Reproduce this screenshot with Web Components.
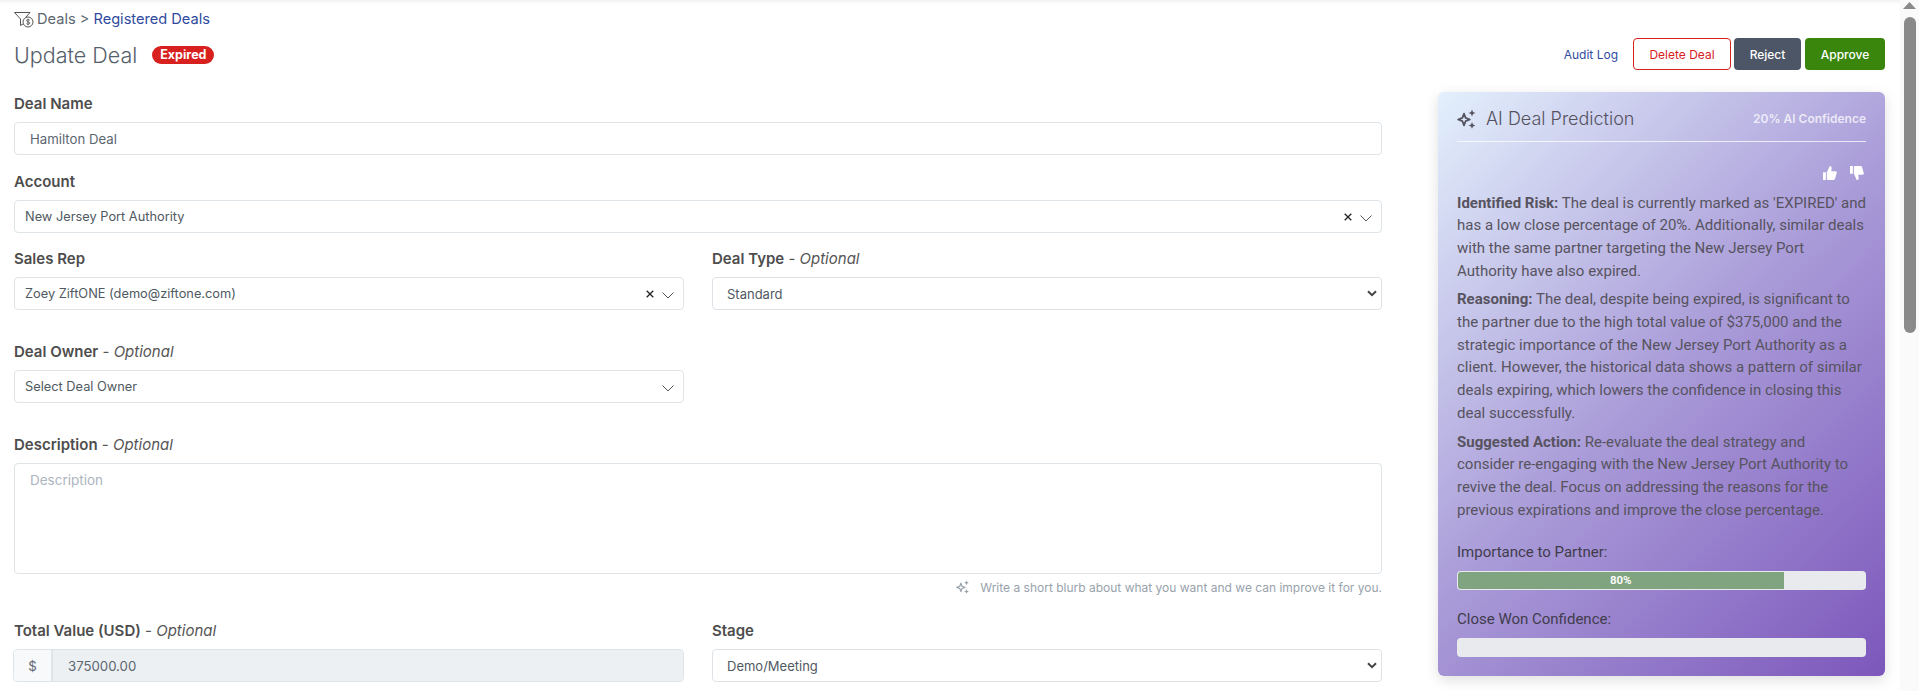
<!DOCTYPE html>
<html lang="en">
<head>
<meta charset="utf-8">
<title>Update Deal</title>
<style>
    html, body { margin: 0; height: 100%; overflow: hidden; background: #fff; }
    body { font-family: Inter, "Liberation Sans", sans-serif; color: #495057; }
</style>
</head>
<body>
<deal-page></deal-page>

<script>
const SPARKLE = `<svg viewBox="0 0 20 20" width="100%" height="100%"><path d="M7 4.6 8.600 8.900 12.900 10.500 8.600 12.100 7 16.400 5.400 12.100 1.100 10.500 5.400 8.900Z" fill="none" stroke="currentColor" stroke-width="1.700" stroke-linejoin="round"/><path fill="currentColor" d="M15 .6 16 3 18.400 4 16 5 15 7.400 14 5 11.600 4 14 3ZM15 13 16 15.400 18.400 16.400 16 17.400 15 19.800 14 17.400 11.600 16.400 14 15.400Z"/></svg>`;
const THIN_CHEVRON = `<svg class="chev" width="12" height="7" viewBox="0 0 12 7" fill="none" stroke="#555" stroke-width="1"><path d="M.5 .5l5.500 5.500 5.500-5.500"/></svg>`;

class FormField extends HTMLElement {
    constructor() {
        super();
        this.attachShadow({ mode: 'open' });
        const optional = this.hasAttribute('optional') ? `<span class="opt"> - <i>Optional</i></span>` : '';
        this.shadowRoot.innerHTML = `
            <style>
                :host { display: block; min-width: 0; }
                label { display: block; font-size: 15px; line-height: 19px; font-weight: 600; color: #4d4d4d; margin-bottom: 9px; }
                .opt { font-weight: 400; color: #555; }
            </style>
            <label>${this.getAttribute('label')}${optional}</label>
            <slot></slot>
        `;
    }
}

class TextBox extends HTMLElement {
    constructor() {
        super();
        this.attachShadow({ mode: 'open' });
        this.shadowRoot.innerHTML = `
            <style>
                :host { display: flex; align-items: center; box-sizing: border-box; height: 33px; padding: 0 15px;
                    border: 1px solid #dee4e8; border-radius: 4px; background: #fff; font-size: 13.2px; color: #5b6670; }
            </style>
            <slot></slot>
        `;
    }
}

// searchable dropdown with thin chevron and optional clear cross
class ComboBox extends HTMLElement {
    constructor() {
        super();
        this.attachShadow({ mode: 'open' });
        const clear = this.hasAttribute('clearable')
            ? `<svg class="x" width="8" height="8" viewBox="0 0 8 8" stroke="#222" stroke-width="1.300"><path d="M.7 .7l6.600 6.600M7.300 .7L.7 7.300"/></svg>`
            : '';
        this.shadowRoot.innerHTML = `
            <style>
                :host { display: flex; align-items: center; box-sizing: border-box; height: 33px; padding: 0 9px 0 10px;
                    border: 1px solid #dee4e8; border-radius: 4px; background: #fff; font-size: 12.8px; color: #4f5962; }
                .val { flex: 1; min-width: 0; }
                .x { display: block; margin-right: 8px; }
                .chev { display: block; margin-top: 4px; }
            </style>
            <span class="val"><slot></slot></span>${clear}${THIN_CHEVRON}
        `;
    }
}

class SelectBox extends HTMLElement {
    constructor() {
        super();
        this.attachShadow({ mode: 'open' });
        this.shadowRoot.innerHTML = `
            <style>
                :host { display: flex; align-items: center; box-sizing: border-box; height: 33px; padding: 0 4px 0 14px;
                    border: 1px solid #dee2e6; border-radius: 4px; background: #fff; font-size: 13px; color: #4f5962; }
                .val { flex: 1; }
                svg { display: block; }
            </style>
            <span class="val"><slot></slot></span>
            <svg width="10" height="7" viewBox="0 0 10 7" fill="none" stroke="#444" stroke-width="2"><path d="M1 1.200l4 4 4-4"/></svg>
        `;
    }
}

class ProgressBar extends HTMLElement {
    constructor() {
        super();
        this.attachShadow({ mode: 'open' });
        const value = this.getAttribute('value');
        const fill = value ? `<div class="fill" style="width:${value}%">${value}%</div>` : '';
        this.shadowRoot.innerHTML = `
            <style>
                :host { display: block; box-sizing: border-box; height: 19px; background: #e9eaee; border-radius: 4px; overflow: hidden; padding: 1px; }
                .fill { height: 100%; background: #7fa47f; border-radius: 3px 0 0 3px; color: #fff; font: 600 11.500px/17px Roboto, sans-serif; text-align: center; }
            </style>
            ${fill}
        `;
    }
}

class AiCard extends HTMLElement {
    constructor() {
        super();
        this.attachShadow({ mode: 'open' });
        this.shadowRoot.innerHTML = `
            <style>
                :host { display: block; box-sizing: border-box; height: 584px; padding: 0 19px; border-radius: 6px;
                    background: linear-gradient(135deg, #e3f0fc 0%, #a99bd8 50%, #7c57bb 100%);
                    box-shadow: 0 4px 14px rgba(0,0,0,.13); font-family: Roboto, sans-serif; color: #57535f; }
                header { display: flex; align-items: center; height: 50px; padding-top: 4px; box-sizing: border-box; border-bottom: 1px solid rgba(255,255,255,.75); }
                .spark { width: 20px; height: 20px; margin-right: 9px; color: #55525f; }
                h2 { flex: 1; margin: 0; font: 300 18px Inter, sans-serif; color: #55525f; }
                .conf { font: 600 12px Inter, sans-serif; color: rgba(255,255,255,.75); }
                .thumbs { display: flex; justify-content: flex-end; gap: 13px; padding: 24px 2px 0 0; height: 14px; }
                .thumbs svg { display: block; width: 14px; height: 14px; }
                p { margin: 0 0 6px; font-size: 15px; line-height: 22.700px; }
                .text { margin: 11.500px -.5px 0 0; }
                .lbl { font-size: 15px; line-height: 20px; color: #413c4c; margin: 19px 0 9px; }
                .first { margin-top: 21px; }
            </style>
            <header>
                <span class="spark">${SPARKLE}</span>
                <h2>AI Deal Prediction</h2>
                <span class="conf">20% AI Confidence</span>
            </header>
            <div class="thumbs">
                <svg viewBox="1 .5 14.500 14.500" fill="#fff"><path d="M1 7h3v8H1zM5 14.500V7l3-6.500c1.500 0 2 1 2 2.200L9.500 6H14c1 0 1.500 1 1.200 1.800l-1.700 6c-.2.700-.8 1.200-1.500 1.200H6.500C5.700 15 5 14.800 5 14.500z"/></svg>
                <svg viewBox="1 1 14.500 14.500" fill="#fff"><path d="M1 1h3v8H1zM5 1.500V9l3 6.500c1.500 0 2-1 2-2.200L9.500 10H14c1 0 1.500-1 1.200-1.800l-1.700-6C13.300 1.500 12.700 1 12 1H6.500C5.700 1 5 1.200 5 1.500z"/></svg>
            </div>
            <div class="text">
                <p><b>Identified Risk:</b> The deal is currently marked as 'EXPIRED' and has a low close percentage of 20%. Additionally, similar deals with the same partner targeting the New Jersey Port Authority have also expired.</p>
                <p><b>Reasoning:</b> The deal, despite being expired, is significant to the partner due to the high total value of $375,000 and the strategic importance of the New Jersey Port Authority as a client. However, the historical data shows a pattern of similar deals expiring, which lowers the confidence in closing this deal successfully.</p>
                <p><b>Suggested Action:</b> Re-evaluate the deal strategy and consider re-engaging with the New Jersey Port Authority to revive the deal. Focus on addressing the reasons for the previous expirations and improve the close percentage.</p>
            </div>
            <div class="lbl first">Importance to Partner:</div>
            <progress-bar value="80"></progress-bar>
            <div class="lbl">Close Won Confidence:</div>
            <progress-bar></progress-bar>
        `;
    }
}

class PageHeader extends HTMLElement {
    constructor() {
        super();
        this.attachShadow({ mode: 'open' });
        this.shadowRoot.innerHTML = `
            <style>
                :host { display: block; }
                nav { display: flex; align-items: center; height: 20px; font-size: 14.600px; color: #5b6670; gap: 3px; }
                nav a { color: #2f4a9e; }
                nav svg { display: block; width: 20px; height: 18px; margin-top: -1px; }
                .row { display: flex; align-items: center; margin-top: 10px; height: 32px; }
                h1 { margin: 0; font-size: 21.500px; font-weight: 300; color: #55606a; }
                .badge { margin-left: 15px; padding: 0 8px; height: 18px; line-height: 18px; border-radius: 9px; background: #d8201f; color: #fff; font-size: 12.500px; font-weight: 700; }
                .actions { margin-left: auto; margin-top: -2px; display: flex; align-items: center; gap: 3px; font-size: 12px; font-weight: 500; }
                .audit { color: #2f4a9e; margin-right: 12px; font-weight: 400; }
                .btn { box-sizing: border-box; height: 32px; display: flex; align-items: center; justify-content: center; border-radius: 4px; }
                .del { width: 98px; border: 1px solid #d8201f; color: #d8201f; font-weight: 400; }
                .rej { width: 67px; background: #4d5666; color: #fff; }
                .app { width: 80px; background: #3a860d; color: #fff; margin-left: 1px; }
            </style>
            <nav>
                <svg viewBox="0 0 20 18" fill="none" stroke="#555" stroke-width="1"><path d="M.5 2.500h15.500l-4 4.500"/><path d="M.5 2.500l6 6.500v6.500l2.500-1.500"/><circle cx="14" cy="12" r="5"/><path d="M15.800 10.200c-.7-.8-3.300-.8-3.300.5 0 1.500 3.300.8 3.300 2.400 0 1.400-2.600 1.300-3.400.6M14 8.800v6.400" stroke-width=".9"/></svg>
                <span>Deals &gt; <a>Registered Deals</a></span>
            </nav>
            <div class="row">
                <h1>Update Deal</h1>
                <span class="badge">Expired</span>
                <div class="actions">
                    <span class="audit">Audit Log</span>
                    <span class="btn del">Delete Deal</span>
                    <span class="btn rej">Reject</span>
                    <span class="btn app">Approve</span>
                </div>
            </div>
        `;
    }
}

class DealForm extends HTMLElement {
    constructor() {
        super();
        this.attachShadow({ mode: 'open' });
        this.shadowRoot.innerHTML = `
            <style>
                :host { display: flex; flex-direction: column; min-width: 0; padding-top: 2px; }
                .pair { display: grid; grid-template-columns: 1fr 1fr; column-gap: 28px; }
                .name { margin-bottom: 17px; }
                .account { margin-bottom: 16px; }
                .tall { margin-bottom: 32px; }
                .desc { box-sizing: border-box; height: 111px; padding: 8px 15px; border: 1px solid #dee4e8; border-radius: 4px; font-size: 13.500px; color: #adb5c0; }
                .hint { display: flex; justify-content: flex-end; align-items: center; height: 22px; margin-top: 2px; font-size: 12px; color: #98a2ab; }
                .hint span { width: 14px; height: 14px; margin-right: 10px; color: #98a2ab; }
                .group { display: flex; box-sizing: border-box; height: 33px; margin-left: -1px; border: 1px solid #dee4e8; border-radius: 4px; font-size: 13.200px; color: #5b6670; overflow: hidden; }
                .addon { width: 39px; display: flex; align-items: center; justify-content: center; background: #f8f9fa; border-right: 2px solid #dee4e8; box-sizing: border-box; }
                .num { flex: 1; display: flex; align-items: center; padding-left: 15px; background: #edf0f2; }
                .value-row { margin-top: 23px; }
            </style>
            <form-field class="name" label="Deal Name"><text-box>Hamilton Deal</text-box></form-field>
            <form-field class="account" label="Account"><combo-box clearable>New Jersey Port Authority</combo-box></form-field>
            <div class="pair">
                <form-field class="tall" label="Sales Rep"><combo-box clearable>Zoey ZiftONE (demo@ziftone.com)</combo-box></form-field>
                <form-field class="tall" label="Deal Type" optional><select-box>Standard</select-box></form-field>
            </div>
            <div class="pair">
                <form-field class="tall" label="Deal Owner" optional><combo-box>Select Deal Owner</combo-box></form-field>
            </div>
            <form-field label="Description" optional>
                <div class="desc">Description</div>
            </form-field>
            <div class="hint"><span>${SPARKLE}</span>Write a short blurb about what you want and we can improve it for you.</div>
            <div class="pair value-row">
                <form-field label="Total Value (USD)" optional>
                    <div class="group"><div class="addon">$</div><div class="num">375000.00</div></div>
                </form-field>
                <form-field label="Stage"><select-box>Demo/Meeting</select-box></form-field>
            </div>
        `;
    }
}

class DealPage extends HTMLElement {
    constructor() {
        super();
        this.attachShadow({ mode: 'open' });
        this.shadowRoot.innerHTML = `
            <style>
                :host { display: grid; grid-template-columns: 1fr 19px; height: 691px; overflow: hidden; }
                main { padding: 9px 15px 0 14px; min-width: 0; box-shadow: inset 0 4px 4px -3px rgba(0,0,0,.08); }
                .cols { display: grid; grid-template-columns: 1fr 447px; column-gap: 56px; margin-top: 21px; }
                .track { background: #fafafa; padding: 2px 3px 0 4px; }
                .track svg { display: block; margin-left: -1px; }
                .thumb { height: 316px; margin-top: 8px; background: #8a8a8a; border-radius: 6px; }
            </style>
            <main>
                <page-header></page-header>
                <div class="cols">
                    <deal-form></deal-form>
                    <ai-card></ai-card>
                </div>
            </main>
            <div class="track">
                <svg width="13" height="7" viewBox="0 0 13 7" fill="#8a8a8a"><path d="M6.500 0L13 7H0z"/></svg>
                <div class="thumb"></div>
            </div>
        `;
    }
}

customElements.define('form-field', FormField);
customElements.define('text-box', TextBox);
customElements.define('combo-box', ComboBox);
customElements.define('select-box', SelectBox);
customElements.define('progress-bar', ProgressBar);
customElements.define('ai-card', AiCard);
customElements.define('page-header', PageHeader);
customElements.define('deal-form', DealForm);
customElements.define('deal-page', DealPage);
</script>
</body>
</html>
